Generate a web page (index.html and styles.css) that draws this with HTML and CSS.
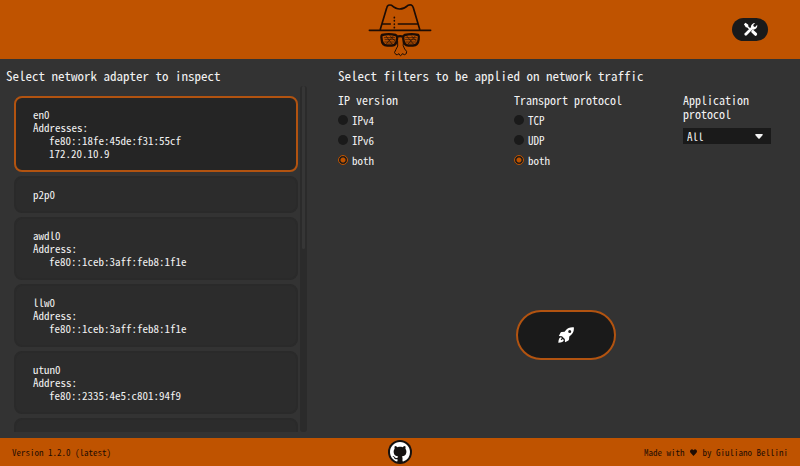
FILE: index.html
```html
<!DOCTYPE html>
<html lang="en">
<head>
<meta charset="utf-8">
<meta name="viewport" content="width=device-width, initial-scale=1">
<title>Sniffnet</title>
<link rel="stylesheet" href="styles.css">
</head>
<body>
<header class="header">
  <svg class="logo" viewBox="24 3 192 171" role="img" aria-label="Sniffnet">
    <g fill="none" stroke="currentColor" stroke-linecap="round" stroke-linejoin="round">
      <path stroke-width="5" d="M28 91H212M61 88L80 24Q83 12 95 16Q108 27 119 27Q132 27 144 16Q156 11 160 23L179 88M69 72H91M115 72H174"/>
      <path stroke-width="5" stroke-dasharray="1 9" d="M103 52V85"/>
      <path stroke-width="7" d="M66 105Q86 100 107 105Q113 107 111 118Q109 136 96 137H82Q66 136 65 118Q63 107 66 105ZM134 105Q155 100 175 105Q178 108 176 118Q174 136 159 137H145Q132 136 130 118Q128 107 134 105ZM111 111Q120 106 130 111"/>
      <path stroke-width="2" d="M73 113H104M75 119H105M74 126H104M80 132H98M78 108L96 132M90 107L104 122M100 108L80 130M137 113H169M136 119H168M138 126H168M144 132H162M141 109L160 132M154 107L168 122M165 109L145 131"/>
      <path stroke-width="3" d="M113 124Q116 141 108 148Q99 159 108 164Q113 165 117 161Q121 173 127 161Q134 167 139 161Q143 154 134 147Q127 139 130 124"/>
    </g>
  </svg>
  <button class="settings" type="button" aria-label="Settings">
    <svg viewBox="0 0 16 16" width="15" height="15">
      <path fill="none" stroke="currentColor" stroke-width="3" stroke-linecap="round" d="M3 13L10 6"/>
      <path fill="currentColor" d="M8.400 5.200Q8.800 1.300 13 1L10.900 3.300L11.400 4.800L12.900 5.200L15.200 3Q15.700 7.400 11.200 8.200L9 7.700Z"/>
      <path fill="currentColor" d="M1 2.500L2.700 .9L5.600 3L5.700 4.700L8.300 7.200L7.100 8.500L4.500 5.900L3 5.700Z"/>
      <path fill="none" stroke="currentColor" stroke-width="3.400" stroke-linecap="round" d="M10.500 10.200L13.400 13"/>
    </svg>
  </button>
</header>

<main class="main">
  <section class="adapters">
    <h1 class="title">Select network adapter to inspect</h1>
    <div class="scroller">
      <ul class="list">
        <li><button type="button" class="card selected" aria-pressed="true">en0<br>Addresses:<span class="address">fe80::18fe:45de:f31:55cf</span><span class="address">172.20.10.9</span></button></li>
        <li><button type="button" class="card">p2p0</button></li>
        <li><button type="button" class="card">awdl0<br>Address:<span class="address">fe80::1ceb:3aff:feb8:1f1e</span></button></li>
        <li><button type="button" class="card">llw0<br>Address:<span class="address">fe80::1ceb:3aff:feb8:1f1e</span></button></li>
        <li><button type="button" class="card">utun0<br>Address:<span class="address">fe80::2335:4e5:c801:94f9</span></button></li>
        <li><button type="button" class="card" aria-label="Next adapter"></button></li>
      </ul>
      <div class="track"><div class="thumb"></div></div>
    </div>
  </section>

  <section class="panel">
    <h2 class="title">Select filters to be applied on network traffic</h2>
    <form class="filters">
      <fieldset class="group">
        <legend class="label">IP version</legend>
        <label class="option"><input type="radio" name="ip">IPv4</label>
        <label class="option"><input type="radio" name="ip">IPv6</label>
        <label class="option"><input type="radio" name="ip" checked>both</label>
      </fieldset>
      <fieldset class="group">
        <legend class="label">Transport protocol</legend>
        <label class="option"><input type="radio" name="transport">TCP</label>
        <label class="option"><input type="radio" name="transport">UDP</label>
        <label class="option"><input type="radio" name="transport" checked>both</label>
      </fieldset>
      <div class="group">
        <label class="label" for="application">Application protocol</label>
        <div class="picker">
          <select id="application"><option>All</option></select>
          <svg class="caret" viewBox="0 0 8 5" width="8" height="5" aria-hidden="true"><path fill="currentColor" d="M1 0H7Q8.300 .3 7.500 1.300L4.700 4.500Q4 5.200 3.300 4.500L.5 1.300Q-.3 .3 1 0Z"/></svg>
        </div>
      </div>
    </form>
    <div class="launch">
      <button class="start" type="button" aria-label="Start">
        <svg viewBox="0 0 16 16" width="16" height="16">
          <path fill="currentColor" fill-rule="evenodd" d="M15.800 .3Q10.500 -.2 7.600 3.400L6.600 4.700L3.600 5Q2.800 5.200 2.400 6L.8 9L4 9.200L6.800 12L7 15.300L10 13.700Q10.800 13.200 11 12.400L11.300 9.400Q16.600 6 15.800 .3ZM11.700 3A1.500 1.500 0 1 1 11.700 6A1.500 1.500 0 0 1 11.700 3Z"/>
          <path fill="currentColor" d="M2.900 10.200Q.6 10.500 .3 15.700Q5.300 15.500 5.800 13.200L4.900 12.100L3.500 13.200L2.700 12.400L3.900 11.100Z"/>
        </svg>
      </button>
    </div>
  </section>
</main>

<footer class="footer">
  <span>Version 1.2.0 (latest)</span>
  <a class="github" href="#" aria-label="GitHub">
    <svg viewBox="0 0 16 16" width="20" height="20"><path fill="currentColor" d="M8 0C3.580 0 0 3.580 0 8c0 3.540 2.290 6.530 5.470 7.590.4.070.55-.17.55-.38 0-.19-.01-.82-.01-1.490-2.010.37-2.530-.49-2.690-.94-.09-.23-.48-.94-.82-1.130-.28-.15-.68-.52-.01-.53.63-.01 1.080.58 1.230.82.72 1.210 1.870.87 2.330.66.070-.52.28-.87.51-1.070-1.780-.2-3.640-.89-3.640-3.950 0-.87.31-1.590.82-2.150-.08-.2-.36-1.020.08-2.120 0 0 .67-.21 2.200.82.64-.18 1.320-.27 2-.27s1.360.09 2 .27c1.530-1.040 2.200-.82 2.200-.82.44 1.100.16 1.920.08 2.120.51.56.82 1.270.82 2.150 0 3.070-1.870 3.750-3.650 3.950.29.25.54.73.54 1.480 0 1.070-.01 1.930-.01 2.200 0 .21.15.46.55.38A8.010 8.010 0 0 0 16 8c0-4.420-3.580-8-8-8z"/></svg>
  </a>
  <span class="credit">Made with <svg viewBox="0 0 8 8" width="7" height="7" role="img" aria-label="love"><path fill="currentColor" d="M4 8L.6 4.200Q-.6 2.500 .6 1Q2.500 -.6 4 1.500Q5.500 -.6 7.400 1Q8.600 2.500 7.400 4.200Z"/></svg> by Giuliano Bellini</span>
</footer>
</body>
</html>
```
FILE: styles.css
```css
* {
  box-sizing: border-box;
}

:root {
  --orange: #bf5300;
  --ink: #1a1a1a;
  --font: "Noto Sans Mono CJK JP", "Noto Sans Mono CJK SC", "Liberation Mono", monospace;
}

body {
  margin: 0;
  height: 100vh;
  display: flex;
  flex-direction: column;
  background: #333;
  color: #f2f2f2;
  font: 11px/13px var(--font);
  font-feature-settings: "zero";
}

button,
select {
  font: inherit;
  font-feature-settings: inherit;
  color: inherit;
}

svg {
  display: block;
}

.header {
  display: grid;
  grid-template-columns: 1fr auto 1fr;
  align-items: center;
  height: 59px;
  padding: 0 32px;
  background: var(--orange);
}

.logo {
  grid-column: 2;
  width: 64px;
  height: 57px;
  color: #1c0c05;
}

.settings {
  justify-self: end;
  display: grid;
  place-items: center;
  width: 36px;
  height: 23px;
  padding: 0;
  border: 0;
  border-radius: 12px;
  background: var(--ink);
  color: #fff;
}

.main {
  flex: 1;
  min-height: 0;
  display: grid;
  grid-template-columns: 307fr 493fr;
}

.adapters,
.panel {
  min-width: 0;
  min-height: 0;
  display: flex;
  flex-direction: column;
}

.adapters {
  padding: 7px 0 6px 6px;
}

.title {
  margin: 0;
  font-size: 13px;
  font-weight: 400;
  line-height: 20px;
  white-space: nowrap;
}

.scroller {
  flex: 1;
  min-height: 0;
  display: flex;
  gap: 2px;
}

.list {
  flex: 1;
  display: flex;
  flex-direction: column;
  gap: 4px;
  margin: 0;
  padding: 10px 0 0 8px;
  list-style: none;
  overflow: hidden;
}

.list li {
  flex: none;
}

.card {
  display: block;
  width: 100%;
  min-height: 37px;
  padding: 10px 17px;
  border: 2px solid #2a2a2a;
  border-radius: 8px;
  background: #2c2c2c;
  text-align: left;
}

.card.selected {
  border-color: #b25310;
  background: #252525;
}

.address {
  display: block;
  padding-left: 16px;
}

.track {
  width: 7px;
  padding: 0 2px;
  border-radius: 3px;
  background: #2b2b2b;
}

.thumb {
  height: 47%;
  border-radius: 2px;
  background: #363636;
}

.panel {
  padding: 7px 7px 0 31px;
}

.filters {
  flex: 5 1 0;
  display: grid;
  grid-template-columns: 176fr 169fr 88fr;
  align-items: start;
  padding: 7px 22px 0 0;
}

.group {
  min-width: 0;
  margin: 0;
  padding: 0;
  border: 0;
}

.label {
  display: block;
  padding: 0;
  font-size: 12px;
  line-height: 14px;
}

.option {
  display: flex;
  align-items: center;
  gap: 4px;
  margin-top: 6px;
  line-height: 14px;
}

.option input {
  appearance: none;
  width: 10px;
  height: 10px;
  margin: 0;
  border-radius: 50%;
  background: var(--ink);
}

.option input:checked {
  border: 1px solid var(--orange);
  background: radial-gradient(circle, var(--orange) 0 2px, var(--ink) 3px);
}

.picker {
  position: relative;
  margin-top: 7px;
}

.picker select {
  appearance: none;
  display: block;
  width: 100%;
  height: 16px;
  padding: 0 4px;
  border: 0;
  border-radius: 0;
  background: var(--ink);
}

.caret {
  position: absolute;
  top: 6px;
  right: 8px;
  pointer-events: none;
}

.launch {
  flex: 7 1 0;
  display: grid;
  place-items: center;
  padding-bottom: 4px;
}

.start {
  display: grid;
  place-items: center;
  width: 100px;
  height: 50px;
  padding: 0;
  border: 2px solid #b25310;
  border-radius: 25px;
  background: var(--ink);
  color: #fff;
}

.footer {
  display: grid;
  grid-template-columns: 1fr auto 1fr;
  align-items: center;
  height: 28px;
  padding: 0 12px;
  background: var(--orange);
  color: #1f0d04;
  font-size: 9px;
}

.github {
  display: grid;
  place-items: center;
  width: 24px;
  height: 24px;
  border-radius: 50%;
  background: #15110f;
  color: #fff;
}

.credit {
  justify-self: end;
}

.credit svg {
  display: inline-block;
  margin: 0 1px;
}
```
